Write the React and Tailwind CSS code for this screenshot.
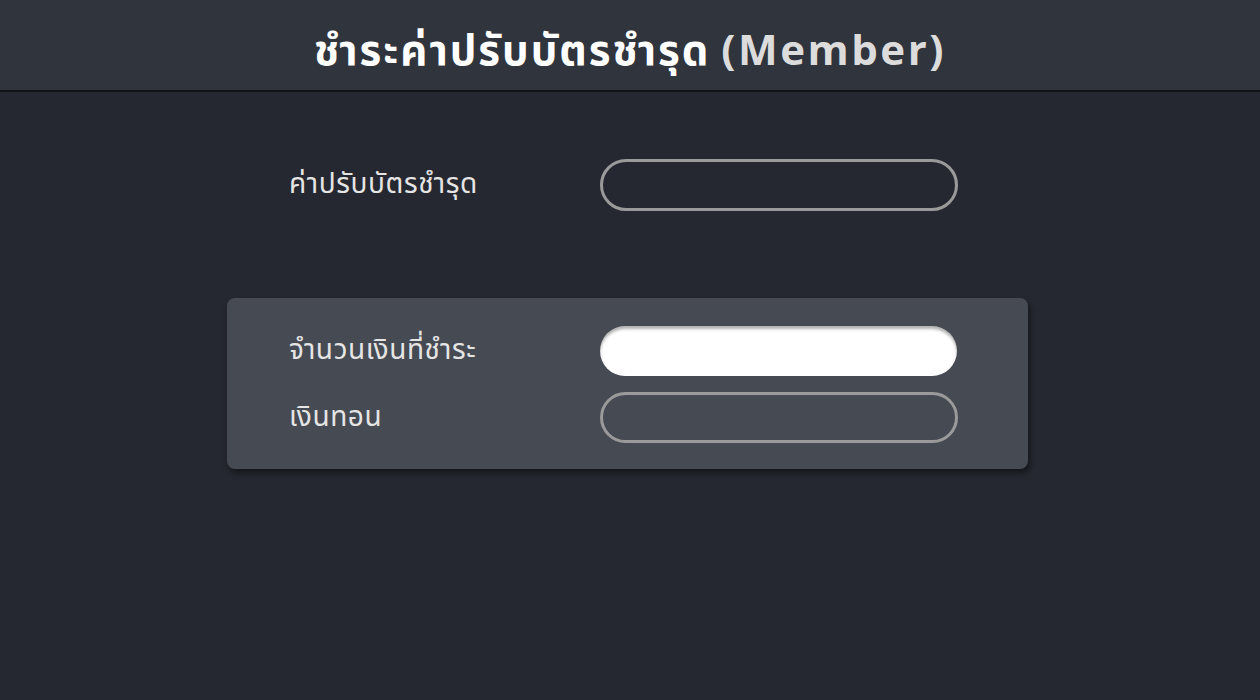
export default function App() {
  return (
    <div
      className="w-[1260px] h-[700px] bg-[#252830] flex flex-col"
      style={{ fontFamily: '"Noto Sans Thai", "Noto Sans", "DejaVu Sans", sans-serif' }}
    >
      {/* header */}
      <div className="h-[92px] bg-[#30343d] border-b-2 border-[#111317] flex items-center justify-center pt-[14px]">
        <h1 className="text-[42px] font-bold text-white leading-none">
          <span className="tracking-[2px]">ชำระค่าปรับบัตรชำรุด</span>{" "}
          <span className="text-[#dcdcdc] tracking-[2.5px]">(Member)</span>
        </h1>
      </div>

      <div className="flex items-center pl-[289px] mt-[67px]">
        <label className="w-[311px] text-[28px] tracking-[0.6px] text-[#e5e5e5]">ค่าปรับบัตรชำรุด</label>
        <input className="w-[358px] h-[52px] rounded-full border-[3px] border-[#9a9a9a] bg-transparent outline-none" />
      </div>

      <div className="ml-[227px] mt-[87px] w-[801px] h-[171px] bg-[#464a53] rounded-lg shadow-[2px_4px_6px_rgba(0,0,0,0.45)] pl-[62px] pt-[28px] flex flex-col gap-[16px]">
        <div className="flex items-center">
          <label className="w-[311px] text-[28px] tracking-[0.6px] text-[#e5e5e5]">จำนวนเงินที่ชำระ</label>
          <input className="w-[357px] h-[50px] rounded-full bg-white shadow-[inset_0_3px_3px_rgba(0,0,0,0.3)] outline-none" />
        </div>
        <div className="flex items-center">
          <label className="w-[311px] text-[28px] tracking-[0.6px] text-[#e5e5e5]">เงินทอน</label>
          <input className="w-[358px] h-[51px] rounded-full border-[3px] border-[#9a9a9a] bg-transparent outline-none" />
        </div>
      </div>
    </div>
  );
}
